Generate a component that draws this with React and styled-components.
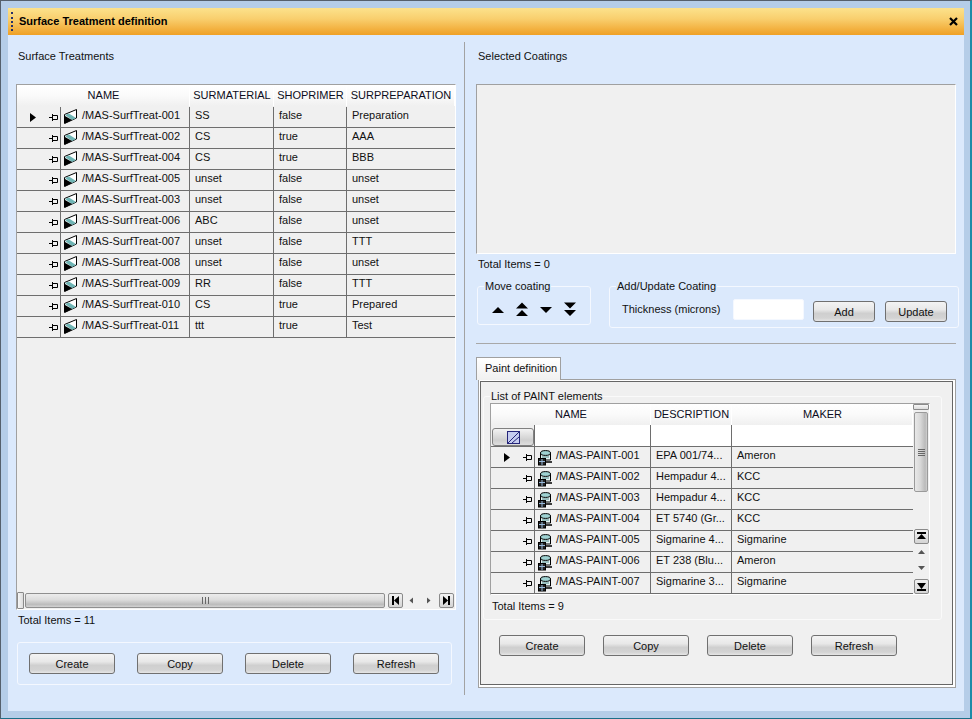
import styled, { createGlobalStyle } from "styled-components";

const GlobalStyle = createGlobalStyle`
  html, body {
    margin: 0;
    padding: 0;
    background: #b5cde8;
  }
  * {
    box-sizing: border-box;
  }
  body {
    font-family: "Liberation Sans", Arial, sans-serif;
    font-size: 11px;
    line-height: 13px;
    color: #111;
  }
`;

const treatments = [
  ["/MAS-SurfTreat-001", "SS", "false", "Preparation"],
  ["/MAS-SurfTreat-002", "CS", "true", "AAA"],
  ["/MAS-SurfTreat-004", "CS", "true", "BBB"],
  ["/MAS-SurfTreat-005", "unset", "false", "unset"],
  ["/MAS-SurfTreat-003", "unset", "false", "unset"],
  ["/MAS-SurfTreat-006", "ABC", "false", "unset"],
  ["/MAS-SurfTreat-007", "unset", "false", "TTT"],
  ["/MAS-SurfTreat-008", "unset", "false", "unset"],
  ["/MAS-SurfTreat-009", "RR", "false", "TTT"],
  ["/MAS-SurfTreat-010", "CS", "true", "Prepared"],
  ["/MAS-SurfTreat-011", "ttt", "true", "Test"],
];

const paints = [
  ["/MAS-PAINT-001", "EPA 001/74...", "Ameron"],
  ["/MAS-PAINT-002", "Hempadur 4...", "KCC"],
  ["/MAS-PAINT-003", "Hempadur 4...", "KCC"],
  ["/MAS-PAINT-004", "ET 5740 (Gr...", "KCC"],
  ["/MAS-PAINT-005", "Sigmarine 4...", "Sigmarine"],
  ["/MAS-PAINT-006", "ET 238 (Blu...", "Ameron"],
  ["/MAS-PAINT-007", "Sigmarine 3...", "Sigmarine"],
];

const LEFT_COLS = "44px 129px 84px 73px 108px";
const PAINT_COLS = "44px 116px 81px 181px";

const Pin = () => (
  <svg width="10" height="9" viewBox="0 0 10 9">
    <path d="M1 4.500h3M4.500 1v7" stroke="#000" strokeWidth="1" fill="none" />
    <path d="M5 2.500h4.500v4H5" stroke="#000" strokeWidth="1" fill="none" />
  </svg>
);

const RowArrow = () => (
  <svg width="6" height="9" viewBox="0 0 6 9">
    <path d="M0 0l6 4.500-6 4.500z" fill="#000" />
  </svg>
);

const TreatIcon = () => (
  <svg width="13" height="15" viewBox="0 0 13 15">
    <path d="M.5 5.500L12.500.5V9L.5 14.500z" fill="#fff" stroke="#000" />
    <path d="M1 6L5 4.500 12 9l-4 2z" fill="#6fb5b5" />
    <path d="M1 7l7 4-7 3.500z" fill="#000" />
  </svg>
);

const PaintIcon = () => (
  <svg width="15" height="17" viewBox="0 -1 15 17">
    <path d="M2.500 3v7h10V3" fill="#e4f2f2" stroke="#000" />
    <ellipse cx="7.500" cy="3" rx="5" ry="2.400" fill="#9fd2d2" stroke="#000" />
    <path d="M4 7h7" stroke="#4d8a8a" />
    <rect x="0.500" y="8.500" width="7" height="6.500" fill="#222" stroke="#000" />
    <path d="M1 11.500h6M4 9v6" stroke="#9bd" />
    <path d="M8 12h6" stroke="#000" strokeWidth="1.500" />
  </svg>
);

const CloseIcon = () => (
  <svg width="9" height="9" viewBox="0 0 9 9">
    <path d="M1 1l7 7M8 1l-7 7" stroke="#000" strokeWidth="2.200" />
  </svg>
);

const FilterIcon = () => (
  <svg width="13" height="13" viewBox="0 0 13 13">
    <rect x="0.500" y="0.500" width="12" height="12" fill="#c6cdf0" stroke="#26267a" />
    <path d="M1 12L12 1M5 12l7-6" stroke="#26267a" />
  </svg>
);

// move up / top / down / bottom arrows of the coating box
const MoveIcon = ({ kind }) => {
  const shapes = {
    up: "M1 7L7 1l6 6z",
    down: "M1 1l6 6 6-6z",
    top: "M1 6.500L7 .5l6 6zM1 14l6-6 6 6z",
    bottom: "M1 .5l6 6 6-6zM1 8l6 6 6-6z",
  };
  const tall = kind === "top" || kind === "bottom";
  return (
    <svg width="14" height={tall ? 15 : 8} viewBox={`0 0 14 ${tall ? 15 : 8}`}>
      <path d={shapes[kind]} fill="#000" />
    </svg>
  );
};

const NavGlyph = ({ kind, dim }) => {
  const shapes = {
    first: "M1 0h2v9H1zM8 0v9L3 4.500z",
    prev: "M6 1.500v6L2.500 4.500z",
    next: "M3 1.500v6l3.500-3z",
    last: "M6 0h2v9H6zM1 0v9l5-4.500z",
    top: "M0 0h9v2H0zM4.500 2L9 7H0z",
    up: "M4.500 2L8 6H1z",
    down: "M1 2h7L4.500 6z",
    bottom: "M0 7h9v2H0zM0 1h9L4.500 7z",
  };
  return (
    <svg width="9" height="9" viewBox="0 0 9 9">
      <path d={shapes[kind]} fill={dim ? "#555" : "#000"} />
    </svg>
  );
};

const Window = styled.div`
  width: 972px;
  height: 719px;
  padding: 7px 6px 7px 7px;
  background: #b5cde8;
  border-top: 1px solid #55606c;
  border-left: 1px solid #55606c;
  border-right: 2px solid #1c8ca8;
  border-bottom: 1px solid #1c6f88;
  display: flex;
  flex-direction: column;
`;

const TitleBar = styled.div`
  height: 27px;
  flex: none;
  display: flex;
  align-items: center;
  padding: 0 6px 0 3px;
  background: linear-gradient(#fce28c, #f9cf6e 40%, #efa025);
`;

const Grip = styled.span`
  width: 2px;
  height: 19px;
  margin-right: 6px;
  border-left: 2px dotted #26306a;
`;

const Title = styled.span`
  flex: 1;
  font-weight: bold;
  font-size: 11px;
  color: #000;
`;

const Body = styled.div`
  flex: 1;
  display: flex;
  padding: 7px 0 16px;
  background: #dbe9fc;
  min-height: 0;
`;

const LeftColumn = styled.section`
  width: 457px;
  flex: none;
  padding: 8px 0 0 8px;
  border-right: 1px solid #a2a2a2;
  display: flex;
  flex-direction: column;
`;

const RightColumn = styled.section`
  flex: 1;
  padding: 8px 0 0 11px;
  display: flex;
  flex-direction: column;
`;

const Label = styled.div`
  height: 13px;
  padding-left: 2px;
`;

const GridFrame = styled.div`
  width: ${(p) => p.$width}px;
  height: ${(p) => p.$height}px;
  margin-top: ${(p) => p.$top ?? 0}px;
  border-top: 1px solid #a0a0a0;
  border-left: 1px solid #a0a0a0;
  border-right: 1px solid #fff;
  border-bottom: 1px solid #fff;
  background: #f0f0f0;
  display: flex;
  overflow: hidden;
`;

const GridMain = styled.div`
  flex: 1;
  min-width: 0;
  display: flex;
  flex-direction: column;
`;

const GridRows = styled.div`
  flex: 1;
  min-height: 0;
  overflow: hidden;
`;

const Row = styled.div`
  display: grid;
  grid-template-columns: ${(p) => p.$cols};
  height: 21px;
  border-bottom: 1px solid #6e6e6e;
`;

const HeaderRow = styled.div`
  display: grid;
  grid-template-columns: ${(p) => p.$cols};
  height: 21px;
  flex: none;
  margin-bottom: ${(p) => (p.$tight ? 0 : 1)}px;
  background: linear-gradient(#fff, #fafafa 50%, #f0f0f0);
`;

const HeaderCell = styled.div`
  grid-column: span ${(p) => p.$span ?? 1};
  padding-left: 1px;
  text-align: center;
  line-height: 20px;
  white-space: nowrap;
  overflow: hidden;
  border-right: 1px solid #fff;
  color: #0c0c20;
`;

const IndicatorCell = styled.div`
  display: flex;
  align-items: flex-start;
  padding: 6px 2px 0 13px;
  border-right: 1px solid #6e6e6e;
`;

const Marker = styled.span`
  width: 18px;
  flex: none;
  display: flex;
`;

const PinSlot = styled.span`
  margin-left: auto;
  display: flex;
`;

const NameCell = styled.div`
  display: flex;
  align-items: flex-start;
  gap: ${(p) => p.$gap}px;
  padding: 2px 0 0 3px;
  border-right: 1px solid #6e6e6e;
  white-space: nowrap;
  overflow: hidden;
`;

const Cell = styled.div`
  padding: 2px 0 0 5px;
  border-right: ${(p) => (p.$last ? "none" : "1px solid #6e6e6e")};
  white-space: nowrap;
  overflow: hidden;
`;

const HScroll = styled.div`
  height: 17px;
  flex: none;
  display: flex;
  align-items: center;
  padding-right: 1px;
  background: #f0f0f0;
`;

const ThumbEnd = styled.div`
  width: 7px;
  height: 17px;
  margin-right: 1px;
  border: 1px solid #8a8a8a;
  border-radius: 1px;
  background: linear-gradient(90deg, #f6f6f6, #dcdcdc);
`;

const HThumb = styled.div`
  flex: 1;
  height: 15px;
  border: 1px solid #8f8f8f;
  border-radius: 2px;
  background: linear-gradient(#ececec, #dcdcdc 45%, #bcbcbc 80%, #d2d2d2);
  display: flex;
  align-items: center;
  justify-content: center;
`;

const GripLines = styled.span`
  width: 7px;
  height: 7px;
  background: repeating-linear-gradient(90deg, #666 0 1px, transparent 1px 3px);
`;

const NavButton = styled.span`
  width: 15px;
  height: 15px;
  flex: none;
  margin-left: ${(p) => p.$gap ?? 0}px;
  margin-top: ${(p) => p.$drop ?? 0}px;
  display: flex;
  align-items: center;
  justify-content: center;
  border-radius: 2px;
  ${(p) =>
    p.$flat
      ? ""
      : `
    border: 1px solid #8a8a8a;
    background: linear-gradient(#f2f2f2, #d4d4d4);
  `}
`;

const VScroll = styled.div`
  width: 16px;
  flex: none;
  display: flex;
  flex-direction: column;
  align-items: center;
  background: #f0f0f0;
`;

const VCap = styled.div`
  width: 16px;
  height: 6px;
  margin-bottom: 2px;
  border: 1px solid #8a8a8a;
  border-radius: 1px;
  background: linear-gradient(#f6f6f6, #dcdcdc);
`;

const VThumb = styled.div`
  width: 14px;
  height: 80px;
  border: 1px solid #9a9a9a;
  border-radius: 2px;
  margin-bottom: 37px;
  background: linear-gradient(90deg, #e8e8e8, #d8d8d8 45%, #bababa 85%, #d0d0d0);
  display: flex;
  align-items: center;
  justify-content: center;
`;

const VGrip = styled.span`
  width: 7px;
  height: 7px;
  background: repeating-linear-gradient(#666 0 1px, transparent 1px 2px);
`;

const TotalText = styled.div`
  height: 13px;
  margin-top: ${(p) => p.$top ?? 4}px;
  padding-left: 2px;
`;

const ActionPanel = styled.div`
  width: 435px;
  height: 43px;
  margin: 15px 0 0 1px;
  padding: 10px 11px 0;
  border: 1px solid #f4f8ff;
  border-radius: 3px;
  display: flex;
  gap: 22px;
`;

const ActionRow = styled.div`
  display: flex;
  gap: 18px;
  margin: 15px 0 0 16px;
`;

const Button = styled.button`
  width: ${(p) => p.$width ?? 86}px;
  height: 21px;
  flex: none;
  padding: 2px 0 0;
  border: 1px solid #707070;
  border-radius: 3px;
  font: inherit;
  color: #111;
  background: linear-gradient(#f3f3f3, #e8e8e8 40%, #cfcfcf 60%, #d3d3d3 85%, #e6e6e6);
`;

const CoatingBox = styled.div`
  width: 480px;
  height: 170px;
  margin-top: 21px;
  background: #f0f0f0;
  border-top: 1px solid #a0a0a0;
  border-left: 1px solid #a0a0a0;
  border-right: 1px solid #fff;
  border-bottom: 1px solid #fff;
`;

const CoatingTools = styled.div`
  display: flex;
  align-items: flex-start;
  gap: 18px;
  margin: 9px 0 0 1px;
`;

const Group = styled.fieldset`
  width: ${(p) => p.$width}px;
  height: ${(p) => p.$height}px;
  margin: 0;
  padding: 0;
  border: 1px solid #f4f8ff;
  border-radius: 3px;
  min-width: 0;
`;

const Legend = styled.legend`
  padding: 0 1px;
  margin-left: ${(p) => p.$offset ?? 6}px;
  line-height: 13px;
`;

const MoveRow = styled.div`
  display: flex;
  align-items: center;
  height: 15px;
  gap: 10px;
  margin-top: 9px;
  padding-left: 13px;
`;

const MoveSlot = styled.span`
  width: 14px;
  display: flex;
  justify-content: center;
  align-items: center;
`;

const ThicknessRow = styled.div`
  display: flex;
  align-items: flex-start;
  padding: 6px 0 0 12px;
`;

const ThicknessLabel = styled.label`
  width: 111px;
  padding-top: 4px;
`;

const TextInput = styled.input`
  width: 71px;
  height: 21px;
  padding: 0;
  margin-right: 9px;
  border: 1px solid #f4f8ff;
  border-radius: 2px;
  background: #fff;
`;

const SmallButton = styled(Button)`
  margin-top: 2px;
  margin-right: 10px;
`;

const Rule = styled.hr`
  width: 480px;
  height: 1px;
  margin: 15px 0 13px;
  border: none;
  background: #a8a8a8;
`;

const Tab = styled.div`
  position: relative;
  z-index: 1;
  width: 85px;
  height: 23px;
  margin-bottom: -1px;
  padding: 4px 0 0 8px;
  border: 1px solid #a0a0a0;
  border-bottom: none;
  background: linear-gradient(#fff, #f0f0f0);
`;

const TabPanel = styled.div`
  width: 478px;
  height: 309px;
  margin-left: 2px;
  padding: 1px 2px 2px 1px;
  border: 1px solid #a0a0a0;
  background: #fff;
`;

const TabInner = styled.div`
  height: 100%;
  padding: 8px 0 0 2px;
  border: 1px solid #666;
  background: #f0f0f0;
`;

const ListGroup = styled.fieldset`
  width: 459px;
  height: 230px;
  margin: 0;
  padding: 0 0 0 6px;
  border: 1px solid #fafafa;
  border-radius: 3px;
  min-width: 0;
`;

const FilterRow = styled.div`
  display: grid;
  grid-template-columns: ${(p) => p.$cols};
  height: 22px;
  flex: none;
  background: #fff;
  border-bottom: 1px solid #6e6e6e;
`;

const FilterCell = styled.div`
  display: flex;
  padding: 3px 0 0 1px;
  background: #f0f0f0;
  border-right: 1px solid #6e6e6e;
`;

const FilterButton = styled.button`
  width: 42px;
  height: 18px;
  padding: 0;
  display: flex;
  align-items: center;
  justify-content: center;
  border: 1px solid #808080;
  border-radius: 3px;
  background: linear-gradient(#f3f3f3, #cfcfcf 70%, #dedede);
`;

const BlankCell = styled.div`
  border-right: ${(p) => (p.$last ? "none" : "1px solid #6e6e6e")};
`;

const App = () => (
  <>
    <GlobalStyle />
    <Window>
      <TitleBar>
        <Grip />
        <Title>Surface Treatment definition</Title>
        <CloseIcon />
      </TitleBar>
      <Body>
        <LeftColumn>
          <Label>Surface Treatments</Label>
          <GridFrame $width={440} $height={526} $top={21}>
            <GridMain>
              <HeaderRow $cols={LEFT_COLS}>
                <HeaderCell $span={2}>NAME</HeaderCell>
                <HeaderCell>SURMATERIAL</HeaderCell>
                <HeaderCell>SHOPRIMER</HeaderCell>
                <HeaderCell>SURPREPARATION</HeaderCell>
              </HeaderRow>
              <GridRows>
                {treatments.map((t, i) => (
                  <Row key={t[0]} $cols={LEFT_COLS}>
                    <IndicatorCell>
                      <Marker>{i === 0 && <RowArrow />}</Marker>
                      <PinSlot>
                        <Pin />
                      </PinSlot>
                    </IndicatorCell>
                    <NameCell $gap={5}>
                      <TreatIcon />
                      {t[0]}
                    </NameCell>
                    <Cell>{t[1]}</Cell>
                    <Cell>{t[2]}</Cell>
                    <Cell $last>{t[3]}</Cell>
                  </Row>
                ))}
              </GridRows>
              <HScroll>
                <ThumbEnd />
                <HThumb>
                  <GripLines />
                </HThumb>
                <NavButton $gap={3}>
                  <NavGlyph kind="first" />
                </NavButton>
                <NavButton $flat $gap={1}>
                  <NavGlyph kind="prev" dim />
                </NavButton>
                <NavButton $flat $gap={2}>
                  <NavGlyph kind="next" dim />
                </NavButton>
                <NavButton $gap={3}>
                  <NavGlyph kind="last" />
                </NavButton>
              </HScroll>
            </GridMain>
          </GridFrame>
          <TotalText>Total Items = 11</TotalText>
          <ActionPanel>
            <Button>Create</Button>
            <Button>Copy</Button>
            <Button>Delete</Button>
            <Button>Refresh</Button>
          </ActionPanel>
        </LeftColumn>
        <RightColumn>
          <Label>Selected Coatings</Label>
          <CoatingBox />
          <TotalText>Total Items = 0</TotalText>
          <CoatingTools>
            <Group $width={114} $height={45}>
              <Legend>Move coating</Legend>
              <MoveRow>
                <MoveSlot>
                  <MoveIcon kind="up" />
                </MoveSlot>
                <MoveSlot>
                  <MoveIcon kind="top" />
                </MoveSlot>
                <MoveSlot>
                  <MoveIcon kind="down" />
                </MoveSlot>
                <MoveSlot>
                  <MoveIcon kind="bottom" />
                </MoveSlot>
              </MoveRow>
            </Group>
            <Group $width={350} $height={48}>
              <Legend>Add/Update Coating</Legend>
              <ThicknessRow>
                <ThicknessLabel>Thickness (microns)</ThicknessLabel>
                <TextInput />
                <SmallButton $width={62}>Add</SmallButton>
                <SmallButton $width={62}>Update</SmallButton>
              </ThicknessRow>
            </Group>
          </CoatingTools>
          <Rule />
          <Tab>Paint definition</Tab>
          <TabPanel>
            <TabInner>
              <ListGroup>
                <Legend $offset={0}>List of PAINT elements</Legend>
                <GridFrame $width={440} $height={192}>
                  <GridMain>
                    <HeaderRow $cols={PAINT_COLS} $tight>
                      <HeaderCell $span={2}>NAME</HeaderCell>
                      <HeaderCell>DESCRIPTION</HeaderCell>
                      <HeaderCell>MAKER</HeaderCell>
                    </HeaderRow>
                    <FilterRow $cols={PAINT_COLS}>
                      <FilterCell>
                        <FilterButton>
                          <FilterIcon />
                        </FilterButton>
                      </FilterCell>
                      <BlankCell />
                      <BlankCell />
                      <BlankCell $last />
                    </FilterRow>
                    <GridRows>
                      {paints.map((p, i) => (
                        <Row key={p[0]} $cols={PAINT_COLS}>
                          <IndicatorCell>
                            <Marker>{i === 0 && <RowArrow />}</Marker>
                            <PinSlot>
                              <Pin />
                            </PinSlot>
                          </IndicatorCell>
                          <NameCell $gap={3}>
                            <PaintIcon />
                            {p[0]}
                          </NameCell>
                          <Cell>{p[1]}</Cell>
                          <Cell $last>{p[2]}</Cell>
                        </Row>
                      ))}
                    </GridRows>
                  </GridMain>
                  <VScroll>
                    <VCap />
                    <VThumb>
                      <VGrip />
                    </VThumb>
                    <NavButton>
                      <NavGlyph kind="top" />
                    </NavButton>
                    <NavButton $flat $drop={1}>
                      <NavGlyph kind="up" dim />
                    </NavButton>
                    <NavButton $flat $drop={1}>
                      <NavGlyph kind="down" dim />
                    </NavButton>
                    <NavButton $drop={3}>
                      <NavGlyph kind="bottom" />
                    </NavButton>
                  </VScroll>
                </GridFrame>
                <TotalText $top={5}>Total Items = 9</TotalText>
              </ListGroup>
              <ActionRow>
                <Button>Create</Button>
                <Button>Copy</Button>
                <Button>Delete</Button>
                <Button>Refresh</Button>
              </ActionRow>
            </TabInner>
          </TabPanel>
        </RightColumn>
      </Body>
    </Window>
  </>
);

export default App;
